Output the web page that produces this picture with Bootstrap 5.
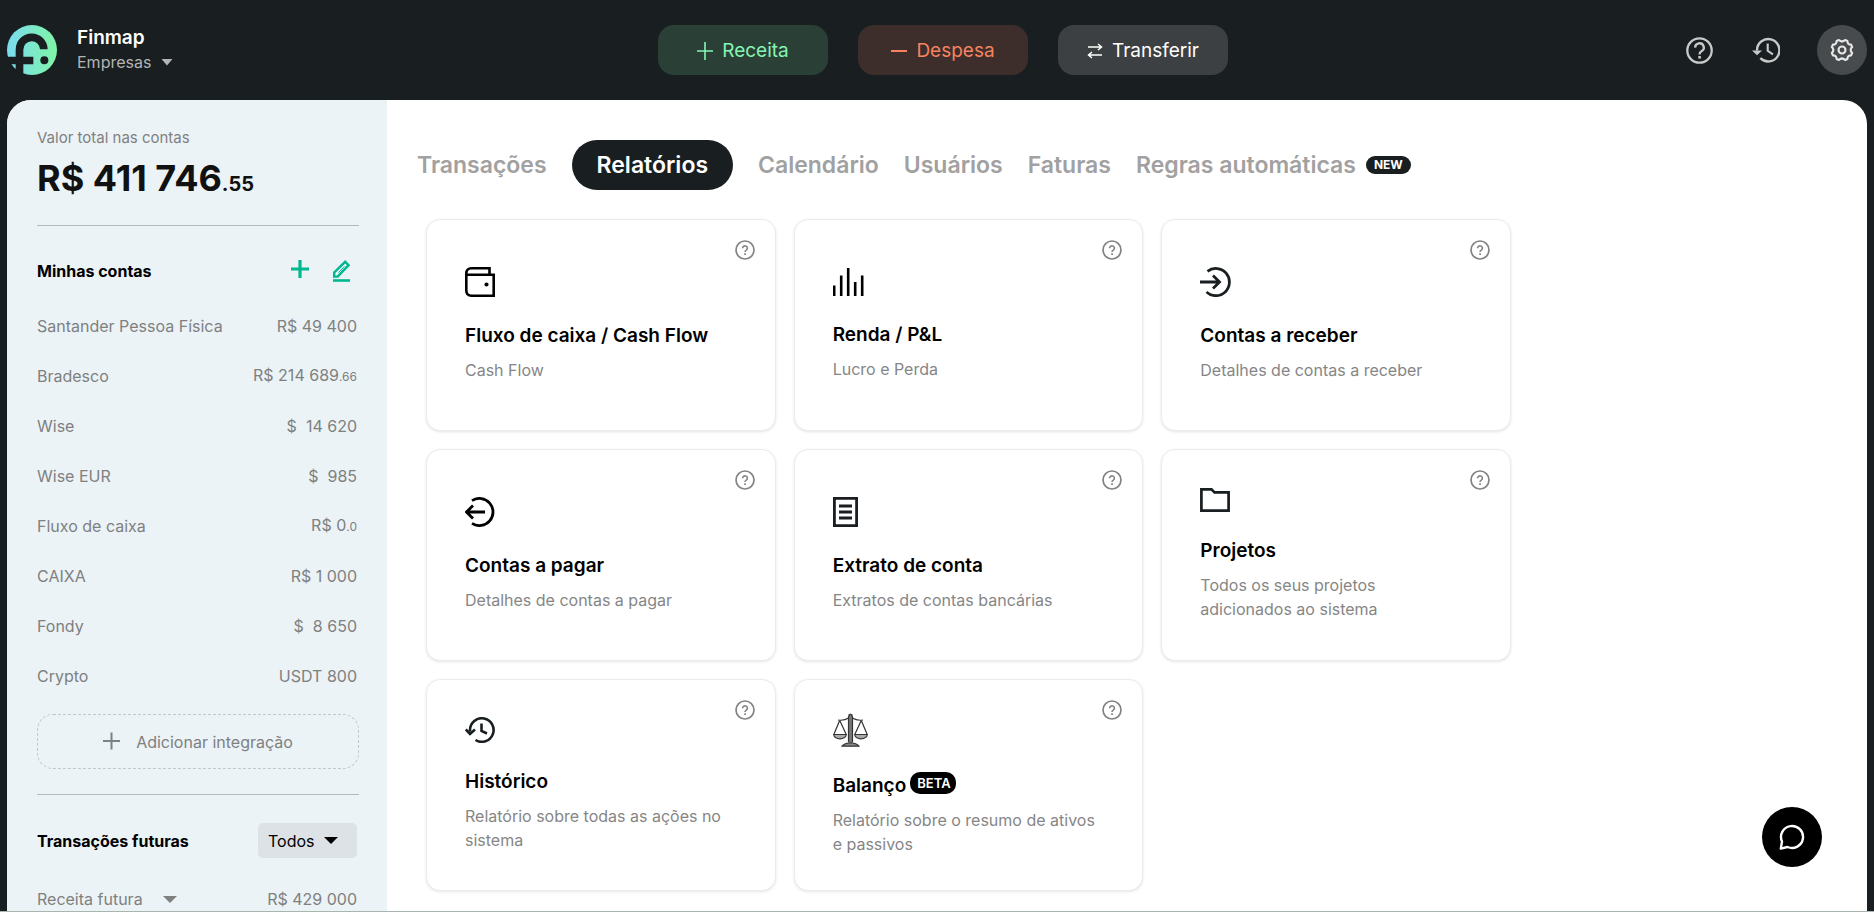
<!DOCTYPE html>
<html lang="pt">
<head>
<meta charset="utf-8">
<meta name="viewport" content="width=device-width, initial-scale=1">
<title>Finmap – Relatórios</title>
<link href="https://cdn.jsdelivr.net/npm/bootstrap@5.3.0/dist/css/bootstrap.min.css" rel="stylesheet">
<style>
:root{--ink:#191e20;--muted:#7f8080;--side:#ebf3f7;--accent:#00b78f}
body{font-family:Inter,"Liberation Sans",sans-serif;background:var(--ink);color:#000;font-size:16px;line-height:24px}
svg{display:block;flex:none}
.app{height:100vh;border-bottom:1px solid #a9b5ae}
.topbar{display:grid;grid-template-columns:1fr auto 1fr;align-items:center;height:100px;padding:0 7px;flex:none}
.brand{gap:20px}
.company{font-size:19px;font-weight:600;color:#fff}
.actions{gap:30px;margin-left:12px}
.action{width:170px;height:50px;border:0;border-radius:16px;font-size:19px;display:flex;align-items:center;justify-content:center;gap:9px;padding:2px 0 0}
.action-in{background:#2a4036;color:#85f5b4}
.action-out{background:#3d2e2c;color:#f5835f}
.action-move{background:#3c4042;color:#fff}
.plain{border:0;background:none;padding:0;color:inherit}
.plain.company-menu{font-size:16px;color:#b3b4b5}
.plain.tool{color:#c8c9c9}
.tool-history{margin:0 37px 0 39px}
.plain.tool-on{width:50px;height:50px;background:#484b4d;color:#e6e6e6}
.shell{margin:0 7px;border-radius:24px 24px 0 0;background:#fff;overflow:hidden;min-height:0}
.side{width:380px;flex:none;background:var(--side);padding:26px 28px 0 30px;color:var(--muted)}
.side hr{margin:0;border-top:1px solid #b4b9bb;opacity:1}
.total-label{font-size:15px}
.total{font-size:36px;line-height:40px;font-weight:700;color:#111;margin:8px 0 21px}
.total small{font-size:20px}
.side h2{font-size:16px;line-height:24px;font-weight:700;color:#000;margin:0}
.accounts-head{padding:33px 9px 18px 0}
.future-head{padding:28px 2px 16px 0}
.plain.accent{color:var(--accent)}
.acct{display:flex;justify-content:space-between;height:50px;align-items:center;padding-right:2px}
.acct small{font-size:12px}
.future-toggle{gap:20px}
.add{height:55px;width:100%;border:1px dashed #c3c7c9;border-radius:16px;background:none;color:var(--muted);gap:16px;margin:13px 0 25px}
.filter{width:99px;height:35px;border:0;border-radius:5px;padding:0 10px;font-size:16px;color:#000;background:#dce2e5 url("data:image/svg+xml,%3Csvg xmlns='http://www.w3.org/2000/svg' width='14' height='7'%3E%3Cpath d='M0 0h14L7 7z'/%3E%3C/svg%3E") no-repeat right 19px center;appearance:none}
.content{padding:40px 30px 0;min-width:0}
.tabs{gap:25px;align-items:center;font-size:23px;font-weight:600}
.tabs .nav-link{padding:0;color:#a1a1a1;line-height:50px;display:flex;align-items:center}
.tabs .nav-link.active{background:var(--ink);color:#fff;padding:0 25px;border-radius:25px}
.tag-new{background:var(--ink);color:#fff;border-radius:9px;font-size:12px;line-height:18px;font-weight:700;padding:0 8px;margin-left:10px}
.tiles{max-width:1103px;padding:29px 9px 0}
.tiles .row{--bs-gutter-x:18px;--bs-gutter-y:18px}
.tile{height:212px;border:1px solid #ebebeb;border-radius:14px;box-shadow:0 1px 3px rgba(0,0,0,.1);padding:0 37px 2px 38px;justify-content:center;align-items:flex-start;color:#000}
.tile h3{font-size:19px;line-height:24px;font-weight:600;margin:27px 0 10px;display:flex}
.tile h3 a{color:inherit;text-decoration:none}
.tile p{margin:0;color:#868686;max-width:268px}
.tile .help{position:absolute;right:20px;top:20px;z-index:2;color:#838383}
.tag-beta{background:#000;color:#fff;border-radius:10px;font-size:13px;line-height:16px;font-weight:600;padding:3px 5px 3px 7px;margin:-2px 0 4px 4px}
.chat{position:fixed;right:52px;bottom:45px;width:60px;height:60px;border:0;background:#000;color:#fff}
</style>
</head>
<body>
<svg width="0" height="0" class="position-absolute" aria-hidden="true">
  <symbol id="q" viewBox="0 0 20 20"><circle cx="10" cy="10" r="9" fill="none" stroke="currentColor" stroke-width="1.7"/><path d="M7.600 8.200a2.400 2.300 0 1 1 3.700 1.900c-.8.5-1.300.9-1.300 1.900" fill="none" stroke="currentColor" stroke-width="1.600"/><path d="M9.200 13.300h1.700V15H9.200z" fill="currentColor"/></symbol>
</svg>
<div class="app d-flex flex-column">
  <header class="topbar">
    <div class="brand d-flex align-items-center">
      <svg width="50" height="50" viewBox="0 0 150 150" role="img" aria-label="Finmap">
        <defs><linearGradient id="lg"><stop offset="0" stop-color="#7bdcf0"/><stop offset="1" stop-color="#7ff5a5"/></linearGradient></defs>
        <circle cx="75" cy="75" r="75" fill="url(#lg)"/>
        <path d="M26 150V118H0V95H26V74a48 48 0 0 1 96-1H99a25 25 0 0 0-50 1V95H79v23H49v32z" fill="#191e20"/>
        <circle cx="112" cy="106" r="12" fill="#191e20"/>
      </svg>
      <div>
        <div class="company">Finmap</div>
        <button class="plain company-menu d-flex align-items-center" type="button">Empresas<svg class="ms-2" width="16" height="7" viewBox="0 0 16 7"><path d="M2.500 0h11L8 6.500z" fill="currentColor"/></svg></button>
      </div>
    </div>
    <div class="actions d-flex">
      <button class="action action-in" type="button"><svg width="16" height="18" viewBox="0 0 16 18"><path d="M0 9h16M8 0v18" stroke="currentColor" stroke-width="1.600"/></svg>Receita</button>
      <button class="action action-out" type="button"><svg width="16" height="18" viewBox="0 0 16 18"><path d="M0 9h16" stroke="currentColor" stroke-width="2"/></svg>Despesa</button>
      <button class="action action-move" type="button"><svg width="16" height="18" viewBox="0 0 16 18"><path d="M1 5h13M11 2l3.500 3L11 8M15 13H2M5 10l-3.500 3L5 16" fill="none" stroke="currentColor" stroke-width="1.500"/></svg>Transferir</button>
    </div>
    <div class="d-flex justify-content-end align-items-center">
      <button class="plain tool" type="button" aria-label="Ajuda"><svg width="27" height="27" viewBox="0 0 27 27"><circle cx="13.500" cy="13.500" r="12.200" fill="none" stroke="currentColor" stroke-width="2.300"/><path d="M9.200 10.600a4.300 4.200 0 1 1 6.500 3.500c-1.500.9-2.200 1.700-2.200 3.400" fill="none" stroke="currentColor" stroke-width="2.300"/><path d="M12.300 19h2.600v2.600h-2.600z" fill="currentColor"/></svg></button>
      <button class="plain tool tool-history" type="button" aria-label="Histórico"><svg width="28" height="26" viewBox="0 0 28 26"><path d="M5 13.500A11.200 11.200 0 1 1 8.300 21.200" fill="none" stroke="currentColor" stroke-width="2.400"/><path d="M0 13.500h10L5 18.300z" fill="currentColor"/><path d="M15.700 6.500v7.300l5.200 3.500" fill="none" stroke="currentColor" stroke-width="2.100"/></svg></button>
      <button class="plain tool-on rounded-circle d-flex align-items-center justify-content-center" type="button" aria-label="Configurações"><svg width="26" height="26" viewBox="0 0 24 24" fill="none" stroke="currentColor" stroke-width="2" stroke-linejoin="round"><circle cx="12" cy="12" r="3.200"/><path d="M9.100 2.800 Q12 5.500 14.900 2.800 L17 3.700 Q17 7.200 20.400 7.100 L21.400 9.300 Q18.600 12 21.400 14.700 L20.400 16.900 Q17 16.800 17 20.300 L14.900 21.200 Q12 18.500 9.100 21.200 L7 20.300 Q7 16.800 3.600 16.900 L2.600 14.700 Q5.400 12 2.600 9.300 L3.600 7.100 Q7 7.200 7 3.700 Z"/></svg></button>
    </div>
  </header>

  <div class="shell d-flex flex-fill">
    <aside class="side">
      <div class="total-label">Valor total nas contas</div>
      <div class="total">R$ 411 746<small>.55</small></div>
      <hr>
      <div class="accounts-head d-flex align-items-center">
        <h2 class="me-auto">Minhas contas</h2>
        <button class="plain accent" type="button" aria-label="Adicionar conta"><svg width="18" height="22" viewBox="0 0 18 22"><path d="M0 9h18M9 0v18" stroke="currentColor" stroke-width="3.200"/></svg></button>
        <button class="plain accent ms-4" type="button" aria-label="Editar contas"><svg width="17" height="22" viewBox="0 0 17 22"><path d="M1.200 16.600v-4.200L12.200 1.800 15.600 5.200 4.700 16.600z" fill="none" stroke="currentColor" stroke-width="2.400"/><path d="M5.500 12.500l6-6" stroke="currentColor" stroke-width="1"/><path d="M0 20.500h17" stroke="currentColor" stroke-width="2.600"/></svg></button>
      </div>
      <div class="acct"><span>Santander Pessoa Física</span><span>R$ 49 400</span></div>
      <div class="acct"><span>Bradesco</span><span>R$ 214 689<small>.66</small></span></div>
      <div class="acct"><span>Wise</span><span>$&nbsp; 14 620</span></div>
      <div class="acct"><span>Wise EUR</span><span>$&nbsp; 985</span></div>
      <div class="acct"><span>Fluxo de caixa</span><span>R$ 0<small>.0</small></span></div>
      <div class="acct"><span>CAIXA</span><span>R$ 1 000</span></div>
      <div class="acct"><span>Fondy</span><span>$&nbsp; 8 650</span></div>
      <div class="acct"><span>Crypto</span><span>USDT 800</span></div>
      <button class="add d-flex align-items-center justify-content-center" type="button"><svg width="17" height="20" viewBox="0 0 17 20"><path d="M0 9h17M8.500 .5v17" stroke="currentColor" stroke-width="2"/></svg>Adicionar integração</button>
      <hr>
      <div class="future-head d-flex align-items-center">
        <h2 class="me-auto"><label for="period">Transações futuras</label></h2>
        <select id="period" class="filter"><option>Todos</option></select>
      </div>
      <div class="acct"><button class="plain future-toggle d-flex align-items-center" type="button">Receita futura<svg width="14" height="7" viewBox="0 0 14 7"><path d="M0 0h14L7 7z" fill="currentColor"/></svg></button><span>R$ 429 000</span></div>
    </aside>

    <main class="content flex-fill">
      <nav class="nav tabs">
        <a class="nav-link" href="#">Transações</a>
        <a class="nav-link active" aria-current="page" href="#">Relatórios</a>
        <a class="nav-link" href="#">Calendário</a>
        <a class="nav-link" href="#">Usuários</a>
        <a class="nav-link" href="#">Faturas</a>
        <a class="nav-link" href="#">Regras automáticas<span class="tag-new">NEW</span></a>
      </nav>
      <div class="tiles"><div class="row row-cols-3">
        <div class="col"><article class="card tile">
          <button class="plain help" type="button" aria-label="Ajuda"><svg width="20" height="20"><use href="#q"/></svg></button>
          <svg width="30" height="30" viewBox="0 0 30 30" fill="none" stroke="#000" stroke-width="2.600"><path d="M24.500 8V1.300H6.500Q1.300 1.300 1.300 6.500V23.500Q1.300 28.700 6.500 28.700H28.700V7.800H2"/><circle cx="21.500" cy="17.500" r="1.100" stroke-width="2"/></svg>
          <h3><a class="stretched-link" href="#">Fluxo de caixa / Cash Flow</a></h3><p>Cash Flow</p></article></div>
        <div class="col"><article class="card tile">
          <button class="plain help" type="button" aria-label="Ajuda"><svg width="20" height="20"><use href="#q"/></svg></button>
          <svg width="31" height="28" viewBox="0 0 31 28"><path d="M1.200 17.500V28M8.200 7.500V28M15.200 0V28M22.200 14V28M29.200 7.500V28" stroke="#000" stroke-width="2.600"/></svg>
          <h3><a class="stretched-link" href="#">Renda / P&amp;L</a></h3><p>Lucro e Perda</p></article></div>
        <div class="col"><article class="card tile">
          <button class="plain help" type="button" aria-label="Ajuda"><svg width="20" height="20"><use href="#q"/></svg></button>
          <svg width="31" height="30" viewBox="0 0 31 30" fill="none" stroke="#191e20" stroke-width="2.800"><path d="M7.500 4.300A13.600 13.600 0 1 1 6.500 25M0 15H19.500M13 8.500L19.500 15 13 21.500"/></svg>
          <h3><a class="stretched-link" href="#">Contas a receber</a></h3><p>Detalhes de contas a receber</p></article></div>
        <div class="col"><article class="card tile">
          <button class="plain help" type="button" aria-label="Ajuda"><svg width="20" height="20"><use href="#q"/></svg></button>
          <svg width="30" height="30" viewBox="0 0 30 30" fill="none" stroke="#000" stroke-width="2.800"><path d="M7 3.600A13.600 13.600 0 1 1 7 26.400M20 15H2M8 8.500L1.500 15 8 21.500"/></svg>
          <h3><a class="stretched-link" href="#">Contas a pagar</a></h3><p>Detalhes de contas a pagar</p></article></div>
        <div class="col"><article class="card tile">
          <button class="plain help" type="button" aria-label="Ajuda"><svg width="20" height="20"><use href="#q"/></svg></button>
          <svg width="25" height="30" viewBox="0 0 25 30" fill="none" stroke="#191e20" stroke-width="2.800"><path d="M1.400 1.400H23.600V28.600H1.400zM6 9H19M6 15H19M6 21H19"/></svg>
          <h3><a class="stretched-link" href="#">Extrato de conta</a></h3><p>Extratos de contas bancárias</p></article></div>
        <div class="col"><article class="card tile">
          <button class="plain help" type="button" aria-label="Ajuda"><svg width="20" height="20"><use href="#q"/></svg></button>
          <svg width="30" height="24" viewBox="0 0 30 24" fill="none" stroke="#191e20" stroke-width="2.700"><path d="M1.400 1.400H11.500L14.500 4.400H28.600V22.600H1.400z"/></svg>
          <h3><a class="stretched-link" href="#">Projetos</a></h3><p>Todos os seus projetos adicionados ao sistema</p></article></div>
        <div class="col"><article class="card tile">
          <button class="plain help" type="button" aria-label="Ajuda"><svg width="20" height="20"><use href="#q"/></svg></button>
          <svg width="30" height="26" viewBox="0 0 30 26" fill="none" stroke="#191e20" stroke-width="2.600"><path d="M5 14.500V13A11.800 11.800 0 1 1 10.500 23M.8 12.500L5 17 10 12.500M16.500 6.500V14L22 16.500"/></svg>
          <h3><a class="stretched-link" href="#">Histórico</a></h3><p>Relatório sobre todas as ações no sistema</p></article></div>
        <div class="col"><article class="card tile">
          <button class="plain help" type="button" aria-label="Ajuda"><svg width="20" height="20"><use href="#q"/></svg></button>
          <svg width="35" height="34" viewBox="0 0 35 34" fill="none" stroke="#333" stroke-width="1.200"><path d="M17.500 1V30" stroke="#777" stroke-width="4"/><path d="M15.500 4V29M19.500 4V29M15.500 4Q17.500-2 19.500 4M5 7Q11 8 15.500 5M30 7Q24 8 19.500 5M6.500 8L1 21M7 8L13 21M28 8L22 21M28.500 8L34 21"/><path d="M.6 21.500H13.400Q12.500 25.800 7 25.800T.6 21.500zM21.600 21.500H34.400Q33.500 25.800 28 25.800T21.600 21.500z" fill="#aaa"/><path d="M9 33.200H26Q25 31 19.500 30H15.500Q10 31 9 33.200z" fill="#888"/></svg>
          <h3><a class="stretched-link" href="#">Balanço</a><span class="tag-beta">BETA</span></h3><p>Relatório sobre o resumo de ativos e passivos</p></article></div>
      </div></div>
    </main>
  </div>
</div>
<button class="chat rounded-circle d-flex align-items-center justify-content-center" type="button" aria-label="Chat"><svg width="26" height="26" viewBox="0 0 26 26" fill="none" stroke="currentColor" stroke-width="2.400" stroke-linejoin="round"><path d="M3 17.500A11 11 0 1 1 8.500 23L1.800 24.600z"/></svg></button>
<script src="https://cdn.jsdelivr.net/npm/bootstrap@5.3.0/dist/js/bootstrap.bundle.min.js"></script>
</body>
</html>
